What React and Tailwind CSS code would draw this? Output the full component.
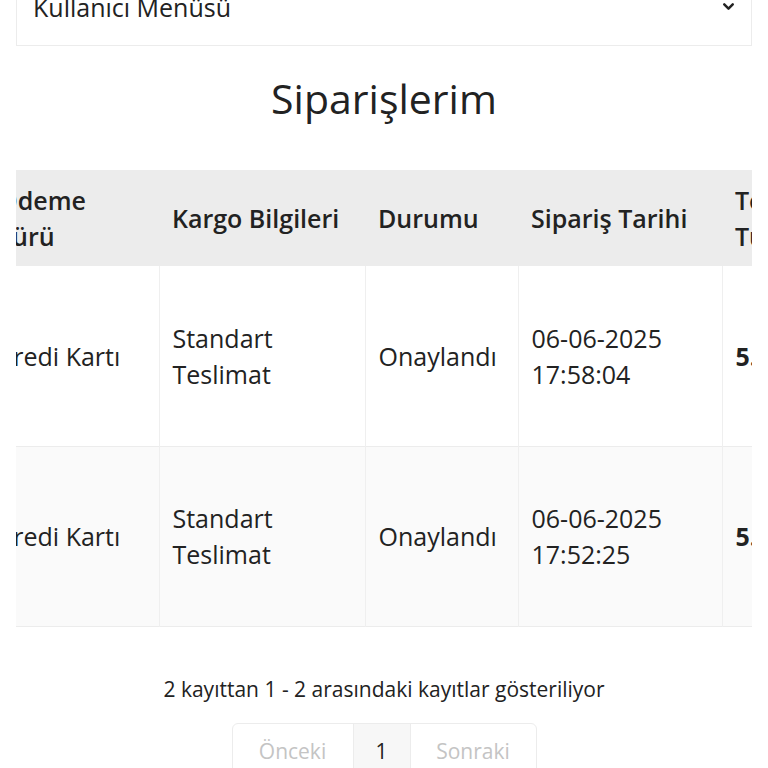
import { ChevronDown } from "lucide-react";

const orders = [
  { pay: "Kredi Kartı", cargo: ["Standart", "Teslimat"], status: "Onaylandı", date: ["06-06-2025", "17:58:04"], total: "5.249,90 TL" },
  { pay: "Kredi Kartı", cargo: ["Standart", "Teslimat"], status: "Onaylandı", date: ["06-06-2025", "17:52:25"], total: "5.249,90 TL" },
];

export default function App() {
  return (
    <div className="min-h-[768px] bg-white px-4 text-[#222] overflow-hidden" style={{ fontFamily: '"Open Sans", Arial, sans-serif' }}>
      <div className="-mt-[32px] flex items-center justify-between border border-[#ececec] px-[16px] py-4">
        <span className="text-[25px] leading-[44px]">Kullanıcı Menüsü</span>
        <ChevronDown size={17} strokeWidth={3.5} className="-mr-[2px] -mt-[2px]" />
      </div>

      <h1 className="mt-[26px] mb-[46px] text-center text-[41px] leading-[52px] font-medium">Siparişlerim</h1>

      <div className="overflow-hidden">
        <table className="-ml-[31px] table-fixed border-collapse text-[25px] leading-[36px]" style={{ width: 945 }}>
          <colgroup>
            <col className="w-[174px]" />
            <col className="w-[206px]" />
            <col className="w-[153px]" />
            <col className="w-[204px]" />
            <col className="w-[208px]" />
          </colgroup>
          <thead>
            <tr className="h-[96px] bg-[#ececec] text-left">
              <th className="px-[13px] font-semibold">Ödeme<br />Türü</th>
              <th className="px-[13px] font-semibold whitespace-nowrap">Kargo Bilgileri</th>
              <th className="px-[13px] font-semibold">Durumu</th>
              <th className="px-[13px] font-semibold whitespace-nowrap">Sipariş Tarihi</th>
              <th className="px-[13px] font-semibold">Toplam<br />Tutar</th>
            </tr>
          </thead>
          <tbody>
            {orders.map((o, i) => (
              <tr key={i} className={`h-[180px] border-b border-[#ececec] ${i % 2 ? "bg-[#fafafa]" : "bg-white"}`}>
                <td className="border-r border-[#efefef] px-[13px] whitespace-nowrap">{o.pay}</td>
                <td className="border-r border-[#efefef] px-[13px]">
                  {o.cargo[0]}
                  <br />
                  {o.cargo[1]}
                </td>
                <td className="border-r border-[#efefef] px-[13px]">{o.status}</td>
                <td className="border-r border-[#efefef] px-[13px]">
                  {o.date[0]}
                  <br />
                  {o.date[1]}
                </td>
                <td className="px-[13px] font-bold whitespace-nowrap">{o.total}</td>
              </tr>
            ))}
          </tbody>
        </table>
      </div>

      <p className="mt-[47px] text-center text-[21px] leading-[30px]">2 kayıttan 1 - 2 arasındaki kayıtlar gösteriliyor</p>

      <div className="mt-[19px] flex justify-center">
        <div className="flex rounded-md border border-[#ececec] text-[21px] leading-[30px]">
          <span className="w-[120px] py-[12px] text-center text-[#c4c4c4]">Önceki</span>
          <span className="w-[58px] border-x border-[#ececec] bg-[#f7f7f7] py-[12px] text-center">1</span>
          <span className="w-[125px] py-[12px] text-center text-[#c4c4c4]">Sonraki</span>
        </div>
      </div>
    </div>
  );
}
